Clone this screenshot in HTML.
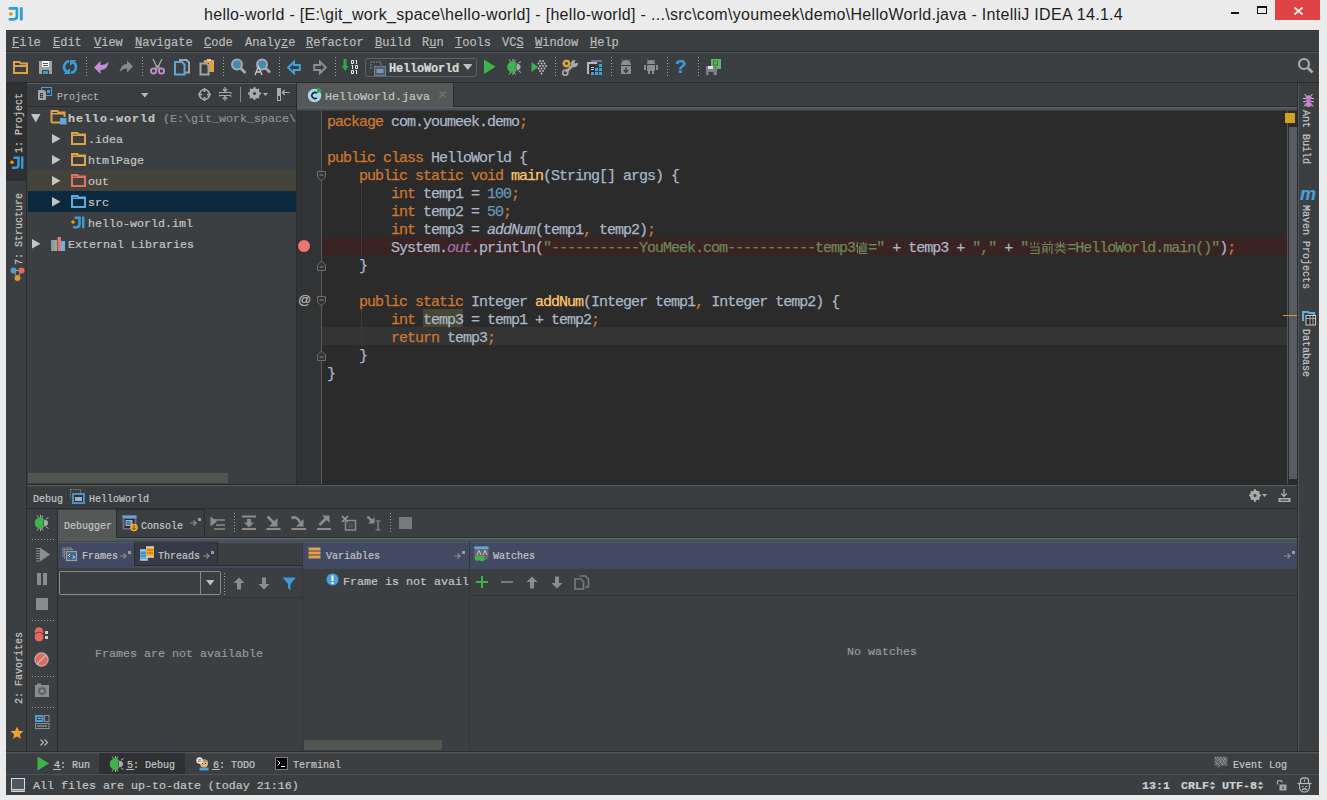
<!DOCTYPE html>
<html><head><meta charset="utf-8">
<style>
*{margin:0;padding:0;box-sizing:border-box}
html,body{width:1327px;height:800px;overflow:hidden;background:#ebebeb;font-family:"Liberation Mono",monospace}
.a{position:absolute;display:block}
.t{position:absolute;white-space:pre;line-height:1;font-family:"Liberation Mono",monospace;-webkit-text-stroke:0.2px}
.u{text-decoration:underline;text-underline-offset:1px}
.code{font-family:"Liberation Mono",monospace;font-size:15px;letter-spacing:-1px;-webkit-text-stroke:0.25px;color:#a9b7c6;white-space:pre;position:absolute;left:327px;line-height:18px}
.k{color:#cc7832}.n{color:#6897bb}.s{color:#6a8759}.f{color:#ffc66d}.st{color:#9876aa;font-style:italic}.i{font-style:italic}
.cj{display:inline-block;width:13px;height:13px;vertical-align:-2px;letter-spacing:0}
.b{font-weight:bold;letter-spacing:1px}
</style></head><body>
<div class="t" style="left:204px;top:7px;font-size:16px;color:#1e1e1e;font-family:'Liberation Sans',sans-serif;letter-spacing:0.3px;-webkit-text-stroke:0">hello-world - [E:\git_work_space\hello-world] - [hello-world] - ...\src\com\youmeek\demo\HelloWorld.java - IntelliJ IDEA 14.1.4</div>
<div class="a" style="left:1275px;top:0px;width:45px;height:20px;background:#e04343;"></div>
<svg class="a" style="left:1294px;top:7px;" width="9" height="8" viewBox="0 0 9 8"><path d="M0.5 0.5L8.5 7.5M8.5 0.5L0.5 7.5" stroke="#fff" stroke-width="1.6"/></svg>
<div class="a" style="left:1231px;top:12px;width:8px;height:2px;background:#111;"></div>
<div class="a" style="left:1257px;top:6px;width:10px;height:8px;background:transparent;border:1px solid #111;border-top-width:2px"></div>
<svg class="a" style="left:8px;top:6px;" width="16" height="16" viewBox="0 0 16 16"><path d="M1.8 2.4H8.9V10.3Q8.9 13.3 5.6 13.3H1.8" fill="none" stroke="#2a9fd8" stroke-width="2.7" stroke-linecap="round" stroke-linejoin="round"/><path d="M13.3 2.4V13.3" stroke="#2a9fd8" stroke-width="2.9" stroke-linecap="round"/><circle cx="2.8" cy="8" r="1.8" fill="#f08c00"/></svg>
<div class="a" style="left:6px;top:30px;width:1313px;height:765px;background:#3c3f41;"></div>
<div class="a" style="left:1319px;top:30px;width:1px;height:765px;background:#f2f2f2;"></div>
<div class="t" style="left:12px;top:37px;font-size:12px;color:#bbbbbb;"><span class="u">F</span>ile</div>
<div class="t" style="left:53px;top:37px;font-size:12px;color:#bbbbbb;"><span class="u">E</span>dit</div>
<div class="t" style="left:94px;top:37px;font-size:12px;color:#bbbbbb;"><span class="u">V</span>iew</div>
<div class="t" style="left:135px;top:37px;font-size:12px;color:#bbbbbb;"><span class="u">N</span>avigate</div>
<div class="t" style="left:204px;top:37px;font-size:12px;color:#bbbbbb;"><span class="u">C</span>ode</div>
<div class="t" style="left:245px;top:37px;font-size:12px;color:#bbbbbb;">Analy<span class="u">z</span>e</div>
<div class="t" style="left:306px;top:37px;font-size:12px;color:#bbbbbb;"><span class="u">R</span>efactor</div>
<div class="t" style="left:375px;top:37px;font-size:12px;color:#bbbbbb;"><span class="u">B</span>uild</div>
<div class="t" style="left:422px;top:37px;font-size:12px;color:#bbbbbb;">R<span class="u">u</span>n</div>
<div class="t" style="left:455px;top:37px;font-size:12px;color:#bbbbbb;"><span class="u">T</span>ools</div>
<div class="t" style="left:502px;top:37px;font-size:12px;color:#bbbbbb;">VC<span class="u">S</span></div>
<div class="t" style="left:535px;top:37px;font-size:12px;color:#bbbbbb;"><span class="u">W</span>indow</div>
<div class="t" style="left:590px;top:37px;font-size:12px;color:#bbbbbb;"><span class="u">H</span>elp</div>
<div class="a" style="left:6px;top:51px;width:1313px;height:1px;background:#2d2f2d;"></div>
<div class="a" style="left:6px;top:52px;width:1313px;height:1px;background:#4e5560;"></div>
<div class="a" style="left:6px;top:30px;width:1313px;height:1px;background:#35352f;"></div>
<div class="a" style="left:6px;top:31px;width:1313px;height:1px;background:#463f46;"></div>
<div class="a" style="left:6px;top:82px;width:1313px;height:1px;background:#2b2b2b;"></div>
<div class="a" style="left:6px;top:83px;width:20px;height:98px;background:#2e3032;"></div>
<div class="a" style="left:26px;top:83px;width:1px;height:669px;background:#2b2b2b;"></div>
<div class="a" style="left:27px;top:84px;width:269px;height:22px;background:#3a3d3f;"></div>
<div class="a" style="left:27px;top:83px;width:269px;height:1px;background:#555d68;"></div>
<div class="a" style="left:27px;top:106px;width:269px;height:1px;background:#2b2b2b;"></div>
<div class="a" style="left:28px;top:170px;width:268px;height:21px;background:#45443a;"></div>
<div class="a" style="left:28px;top:191px;width:268px;height:21px;background:#0d293e;"></div>
<div class="a" style="left:28px;top:473px;width:200px;height:10px;background:#52554f;"></div>
<div class="a" style="left:296px;top:83px;width:1px;height:401px;background:#2b2b2b;"></div>
<div class="a" style="left:297px;top:83px;width:156px;height:24px;background:#545856;"></div>
<div class="a" style="left:453px;top:83px;width:1px;height:24px;background:#2b2b2b;"></div>
<div class="a" style="left:454px;top:106px;width:843px;height:1px;background:#2b2b2b;"></div>
<div class="a" style="left:297px;top:107px;width:1000px;height:1px;background:#58656b;"></div>
<div class="a" style="left:297px;top:108px;width:1000px;height:2px;background:#4c5360;"></div>
<div class="a" style="left:297px;top:110px;width:1000px;height:1px;background:#3f3d33;"></div>
<div class="a" style="left:297px;top:111px;width:24px;height:373px;background:#313335;"></div>
<div class="a" style="left:321px;top:111px;width:1px;height:373px;background:#565a60;"></div>
<div class="a" style="left:322px;top:111px;width:975px;height:373px;background:#2b2b2b;"></div>
<div class="a" style="left:322px;top:237px;width:966px;height:18px;background:#3a2323;"></div>
<div class="a" style="left:322px;top:327px;width:966px;height:18px;background:#343434;"></div>
<div class="a" style="left:423px;top:309px;width:40px;height:18px;background:#484733;"></div>
<div class="a" style="left:1287px;top:111px;width:1px;height:373px;background:#4e5662;"></div>
<div class="a" style="left:1289px;top:127px;width:8px;height:352px;background:#585c62;"></div>
<div class="a" style="left:1285px;top:113px;width:10px;height:10px;background:#d3a21b;"></div>
<div class="a" style="left:298px;top:240px;width:12px;height:12px;background:#ee7670;border-radius:6px"></div>
<div class="a" style="left:1297px;top:83px;width:1px;height:669px;background:#2b2b2b;"></div>
<div class="a" style="left:1298px;top:83px;width:1px;height:669px;background:#4e5660;"></div>
<div class="a" style="left:27px;top:486px;width:1270px;height:22px;background:#3a3d3f;"></div>
<div class="a" style="left:27px;top:484px;width:1270px;height:1px;background:#2b2b2b;"></div>
<div class="a" style="left:27px;top:485px;width:1270px;height:1px;background:#4e5660;"></div>
<div class="a" style="left:27px;top:486px;width:1270px;height:1px;background:#45453c;"></div>
<div class="a" style="left:27px;top:508px;width:1270px;height:1px;background:#2b2b2b;"></div>
<div class="a" style="left:57px;top:509px;width:1px;height:242px;background:#2b2b2b;"></div>
<div class="a" style="left:58px;top:510px;width:58px;height:31px;background:#545856;"></div>
<div class="a" style="left:116px;top:537px;width:1181px;height:1px;background:#2b2e2a;"></div>
<div class="a" style="left:116px;top:538px;width:1181px;height:1px;background:#5d6a70;"></div>
<div class="a" style="left:116px;top:539px;width:1181px;height:2px;background:#4c5360;"></div>
<div class="a" style="left:58px;top:541px;width:1239px;height:1px;background:#4a4838;"></div>
<div class="a" style="left:58px;top:542px;width:1239px;height:1px;background:#4f5a70;"></div>
<div class="a" style="left:58px;top:543px;width:244px;height:25px;background:#414a62;"></div>
<div class="a" style="left:134px;top:542px;width:83px;height:23px;background:#363a46;"></div>
<div class="a" style="left:218px;top:543px;width:84px;height:22px;background:#3c3f41;"></div>
<div class="a" style="left:218px;top:565px;width:84px;height:1px;background:#2b2b2b;"></div>
<div class="a" style="left:303px;top:543px;width:166px;height:26px;background:#414a62;"></div>
<div class="a" style="left:470px;top:543px;width:827px;height:26px;background:#414a62;"></div>
<div class="a" style="left:302px;top:542px;width:1px;height:209px;background:#343638;"></div>
<div class="a" style="left:469px;top:542px;width:1px;height:209px;background:#343638;"></div>
<div class="a" style="left:304px;top:740px;width:138px;height:10px;background:#52554f;"></div>
<div class="a" style="left:6px;top:751px;width:1313px;height:1px;background:#2b2e2a;"></div>
<div class="a" style="left:6px;top:752px;width:1313px;height:1px;background:#4e5560;"></div>
<div class="a" style="left:6px;top:753px;width:1313px;height:1px;background:#4a4838;"></div>
<div class="a" style="left:99px;top:753px;width:86px;height:21px;background:#2e3032;"></div>
<div class="a" style="left:6px;top:774px;width:1313px;height:1px;background:#4d5055;"></div>
<div class="t" style="left:57px;top:93px;font-size:10px;color:#a8aaa8;">Project</div>
<div class="t" style="left:68px;top:114px;font-size:11.67px;color:#c4c4c4;font-weight:bold;letter-spacing:1px">hello-world</div>
<div class="a" style="left:0;top:0;width:296px;height:130px;overflow:hidden">
<div class="t" style="left:163px;top:114px;font-size:11.67px;color:#8f9192;">(E:\git_work_space\hello-world)</div>
</div>
<div class="t" style="left:88px;top:135px;font-size:11.67px;color:#c4c4c4;">.idea</div>
<div class="t" style="left:88px;top:156px;font-size:11.67px;color:#c4c4c4;">htmlPage</div>
<div class="t" style="left:88px;top:177px;font-size:11.67px;color:#c4c4c4;">out</div>
<div class="t" style="left:88px;top:198px;font-size:11.67px;color:#c4c4c4;">src</div>
<div class="t" style="left:88px;top:219px;font-size:11.67px;color:#c4c4c4;">hello-world.iml</div>
<div class="t" style="left:68px;top:240px;font-size:11.67px;color:#c4c4c4;">External Libraries</div>
<div class="t" style="left:325px;top:92px;font-size:11.67px;color:#c4c4c4;">HelloWorld.java</div>
<div class="t" style="left:33px;top:495px;font-size:10px;color:#c4c4c4;">Debug</div>
<div class="t" style="left:89px;top:495px;font-size:10px;color:#c4c4c4;">HelloWorld</div>
<div class="t" style="left:64px;top:522px;font-size:10px;color:#c4c4c4;">Debugger</div>
<div class="t" style="left:141px;top:522px;font-size:10px;color:#c4c4c4;">Console</div>
<div class="t" style="left:82px;top:552px;font-size:10px;color:#c4c4c4;">Frames</div>
<div class="t" style="left:158px;top:552px;font-size:10px;color:#c4c4c4;">Threads</div>
<div class="t" style="left:326px;top:552px;font-size:10px;color:#c4c4c4;">Variables</div>
<div class="t" style="left:493px;top:552px;font-size:10px;color:#c4c4c4;">Watches</div>
<div class="a" style="left:303px;top:569px;width:166px;height:26px;overflow:hidden">
<div class="t" style="left:40px;top:8px;font-size:11.67px;color:#c4c4c4;">Frame is not avail</div>
</div>
<div class="t" style="left:95px;top:649px;font-size:11.67px;color:#999999;">Frames are not available</div>
<div class="t" style="left:847px;top:647px;font-size:11.67px;color:#999999;">No watches</div>
<div class="t" style="left:54px;top:761px;font-size:10px;color:#c4c4c4;">4: Run</div>
<div class="t" style="left:127px;top:761px;font-size:10px;color:#c4c4c4;">5: Debug</div>
<div class="t" style="left:213px;top:761px;font-size:10px;color:#c4c4c4;">6: TODO</div>
<div class="t" style="left:293px;top:761px;font-size:10px;color:#c4c4c4;">Terminal</div>
<div class="t" style="left:1233px;top:761px;font-size:10px;color:#c4c4c4;">Event Log</div>
<div class="t" style="left:33px;top:781px;font-size:11.67px;color:#c4c4c4;">All files are up-to-date (today 21:16)</div>
<div class="t" style="left:1142px;top:781px;font-size:11.67px;color:#d0d0d0;font-weight:bold">13:1</div>
<div class="t" style="left:1181px;top:781px;font-size:11.67px;color:#d0d0d0;font-weight:bold">CRLF</div>
<div class="t" style="left:1222px;top:781px;font-size:11.67px;color:#d0d0d0;font-weight:bold">UTF-8</div>
<svg class="a" style="left:1209px;top:781px;" width="7" height="9" viewBox="0 0 7 9"><path d="M3.5 0.5L6.5 3.5H0.5Z M3.5 8.5L6.5 5.5H0.5Z" fill="#c8c8c8"/></svg>
<svg class="a" style="left:1257px;top:781px;" width="7" height="9" viewBox="0 0 7 9"><path d="M3.5 0.5L6.5 3.5H0.5Z M3.5 8.5L6.5 5.5H0.5Z" fill="#c8c8c8"/></svg>
<div class="t" style="left:15px;top:153px;font-size:10px;color:#c4c4c4;transform-origin:0 0;transform:rotate(-90deg)">1: Project</div>
<div class="t" style="left:15px;top:265px;font-size:10px;color:#c4c4c4;transform-origin:0 0;transform:rotate(-90deg)">7: Structure</div>
<div class="t" style="left:15px;top:704px;font-size:10px;color:#c4c4c4;transform-origin:0 0;transform:rotate(-90deg)">2: Favorites</div>
<div class="t" style="left:1310px;top:110px;font-size:10px;color:#c4c4c4;transform-origin:0 0;transform:rotate(90deg)">Ant Build</div>
<div class="t" style="left:1310px;top:205px;font-size:10px;color:#c4c4c4;transform-origin:0 0;transform:rotate(90deg)">Maven Projects</div>
<div class="t" style="left:1310px;top:329px;font-size:10px;color:#c4c4c4;transform-origin:0 0;transform:rotate(90deg)">Database</div>
<div class="a" style="left:86px;top:57px;width:1px;height:1px;background:#9a9a9a;"></div>
<div class="a" style="left:86px;top:60px;width:1px;height:1px;background:#9a9a9a;"></div>
<div class="a" style="left:86px;top:63px;width:1px;height:1px;background:#9a9a9a;"></div>
<div class="a" style="left:86px;top:66px;width:1px;height:1px;background:#9a9a9a;"></div>
<div class="a" style="left:86px;top:69px;width:1px;height:1px;background:#9a9a9a;"></div>
<div class="a" style="left:86px;top:72px;width:1px;height:1px;background:#9a9a9a;"></div>
<div class="a" style="left:86px;top:75px;width:1px;height:1px;background:#9a9a9a;"></div>
<div class="a" style="left:142px;top:57px;width:1px;height:1px;background:#9a9a9a;"></div>
<div class="a" style="left:142px;top:60px;width:1px;height:1px;background:#9a9a9a;"></div>
<div class="a" style="left:142px;top:63px;width:1px;height:1px;background:#9a9a9a;"></div>
<div class="a" style="left:142px;top:66px;width:1px;height:1px;background:#9a9a9a;"></div>
<div class="a" style="left:142px;top:69px;width:1px;height:1px;background:#9a9a9a;"></div>
<div class="a" style="left:142px;top:72px;width:1px;height:1px;background:#9a9a9a;"></div>
<div class="a" style="left:142px;top:75px;width:1px;height:1px;background:#9a9a9a;"></div>
<div class="a" style="left:223px;top:57px;width:1px;height:1px;background:#9a9a9a;"></div>
<div class="a" style="left:223px;top:60px;width:1px;height:1px;background:#9a9a9a;"></div>
<div class="a" style="left:223px;top:63px;width:1px;height:1px;background:#9a9a9a;"></div>
<div class="a" style="left:223px;top:66px;width:1px;height:1px;background:#9a9a9a;"></div>
<div class="a" style="left:223px;top:69px;width:1px;height:1px;background:#9a9a9a;"></div>
<div class="a" style="left:223px;top:72px;width:1px;height:1px;background:#9a9a9a;"></div>
<div class="a" style="left:223px;top:75px;width:1px;height:1px;background:#9a9a9a;"></div>
<div class="a" style="left:279px;top:57px;width:1px;height:1px;background:#9a9a9a;"></div>
<div class="a" style="left:279px;top:60px;width:1px;height:1px;background:#9a9a9a;"></div>
<div class="a" style="left:279px;top:63px;width:1px;height:1px;background:#9a9a9a;"></div>
<div class="a" style="left:279px;top:66px;width:1px;height:1px;background:#9a9a9a;"></div>
<div class="a" style="left:279px;top:69px;width:1px;height:1px;background:#9a9a9a;"></div>
<div class="a" style="left:279px;top:72px;width:1px;height:1px;background:#9a9a9a;"></div>
<div class="a" style="left:279px;top:75px;width:1px;height:1px;background:#9a9a9a;"></div>
<div class="a" style="left:335px;top:57px;width:1px;height:1px;background:#9a9a9a;"></div>
<div class="a" style="left:335px;top:60px;width:1px;height:1px;background:#9a9a9a;"></div>
<div class="a" style="left:335px;top:63px;width:1px;height:1px;background:#9a9a9a;"></div>
<div class="a" style="left:335px;top:66px;width:1px;height:1px;background:#9a9a9a;"></div>
<div class="a" style="left:335px;top:69px;width:1px;height:1px;background:#9a9a9a;"></div>
<div class="a" style="left:335px;top:72px;width:1px;height:1px;background:#9a9a9a;"></div>
<div class="a" style="left:335px;top:75px;width:1px;height:1px;background:#9a9a9a;"></div>
<div class="a" style="left:555px;top:57px;width:1px;height:1px;background:#9a9a9a;"></div>
<div class="a" style="left:555px;top:60px;width:1px;height:1px;background:#9a9a9a;"></div>
<div class="a" style="left:555px;top:63px;width:1px;height:1px;background:#9a9a9a;"></div>
<div class="a" style="left:555px;top:66px;width:1px;height:1px;background:#9a9a9a;"></div>
<div class="a" style="left:555px;top:69px;width:1px;height:1px;background:#9a9a9a;"></div>
<div class="a" style="left:555px;top:72px;width:1px;height:1px;background:#9a9a9a;"></div>
<div class="a" style="left:555px;top:75px;width:1px;height:1px;background:#9a9a9a;"></div>
<div class="a" style="left:611px;top:57px;width:1px;height:1px;background:#9a9a9a;"></div>
<div class="a" style="left:611px;top:60px;width:1px;height:1px;background:#9a9a9a;"></div>
<div class="a" style="left:611px;top:63px;width:1px;height:1px;background:#9a9a9a;"></div>
<div class="a" style="left:611px;top:66px;width:1px;height:1px;background:#9a9a9a;"></div>
<div class="a" style="left:611px;top:69px;width:1px;height:1px;background:#9a9a9a;"></div>
<div class="a" style="left:611px;top:72px;width:1px;height:1px;background:#9a9a9a;"></div>
<div class="a" style="left:611px;top:75px;width:1px;height:1px;background:#9a9a9a;"></div>
<div class="a" style="left:667px;top:57px;width:1px;height:1px;background:#9a9a9a;"></div>
<div class="a" style="left:667px;top:60px;width:1px;height:1px;background:#9a9a9a;"></div>
<div class="a" style="left:667px;top:63px;width:1px;height:1px;background:#9a9a9a;"></div>
<div class="a" style="left:667px;top:66px;width:1px;height:1px;background:#9a9a9a;"></div>
<div class="a" style="left:667px;top:69px;width:1px;height:1px;background:#9a9a9a;"></div>
<div class="a" style="left:667px;top:72px;width:1px;height:1px;background:#9a9a9a;"></div>
<div class="a" style="left:667px;top:75px;width:1px;height:1px;background:#9a9a9a;"></div>
<div class="a" style="left:698px;top:57px;width:1px;height:1px;background:#9a9a9a;"></div>
<div class="a" style="left:698px;top:60px;width:1px;height:1px;background:#9a9a9a;"></div>
<div class="a" style="left:698px;top:63px;width:1px;height:1px;background:#9a9a9a;"></div>
<div class="a" style="left:698px;top:66px;width:1px;height:1px;background:#9a9a9a;"></div>
<div class="a" style="left:698px;top:69px;width:1px;height:1px;background:#9a9a9a;"></div>
<div class="a" style="left:698px;top:72px;width:1px;height:1px;background:#9a9a9a;"></div>
<div class="a" style="left:698px;top:75px;width:1px;height:1px;background:#9a9a9a;"></div>
<svg class="a" style="left:13px;top:61px;" width="15" height="13" viewBox="0 0 15 13"><path d="M1 12V1H6.5L8 2.5H14V12Z" fill="none" stroke="#dba24a" stroke-width="2"/><rect x="2" y="4" width="11" height="2" fill="#dba24a"/></svg>
<svg class="a" style="left:39px;top:61px;" width="13" height="13" viewBox="0 0 13 13"><path d="M0 0H13V13H0Z" fill="#a3a3a3"/><rect x="3" y="0" width="7" height="6" fill="#fff"/><rect x="4" y="2" width="5" height="1" fill="#555"/><rect x="4" y="4" width="5" height="1" fill="#555"/><rect x="3" y="9" width="7" height="4" fill="#3c3f41"/><rect x="4" y="10" width="5" height="3" fill="#3d9ad6"/></svg>
<svg class="a" style="left:62px;top:59px;" width="16" height="16" viewBox="0 0 16 16"><path d="M7.2 2.2A5.8 5.8 0 0 0 5 13" fill="none" stroke="#3d9ad6" stroke-width="2.6"/><path d="M8.8 13.8A5.8 5.8 0 0 0 11 3" fill="none" stroke="#3d9ad6" stroke-width="2.6"/><path d="M1.5 15H8V9Z" fill="#3d9ad6"/><path d="M14.5 1H8V7Z" fill="#3d9ad6"/></svg>
<svg class="a" style="left:94px;top:60px;" width="15" height="15" viewBox="0 0 15 15"><path d="M0 7.5L6.5 1V5Q12 5 14.5 1.5Q14 10 6.5 10V14Z" fill="#c28ed4"/></svg>
<svg class="a" style="left:119px;top:60px;" width="15" height="14" viewBox="0 0 15 14"><path d="M14 6.5L8 0.5V4Q2 4 0.5 12.5Q3 8.5 8 8.5V12.5Z" fill="#8a8a8a"/></svg>
<svg class="a" style="left:150px;top:58px;" width="15" height="17" viewBox="0 0 15 17"><path d="M3 1L7.5 10M12 1L7.5 10" stroke="#a8a8a8" stroke-width="1.3"/><rect x="6" y="8" width="3" height="3" fill="none" stroke="#a8a8a8" stroke-width="1"/><circle cx="3.5" cy="13" r="2.6" fill="none" stroke="#c28ed4" stroke-width="1.8"/><circle cx="11.5" cy="13" r="2.6" fill="none" stroke="#c28ed4" stroke-width="1.8"/></svg>
<svg class="a" style="left:174px;top:59px;" width="16" height="17" viewBox="0 0 16 17"><path d="M5 1H12.5L15 3.5V13.5H11" fill="none" stroke="#a3a3a3" stroke-width="2"/><path d="M1 3H8L10.5 5.5V15.5H1Z" fill="#3c3f41" stroke="#5ba7d9" stroke-width="2"/></svg>
<svg class="a" style="left:199px;top:58px;" width="16" height="18" viewBox="0 0 16 18"><path d="M5 2H15V14H10V5H5Z" fill="#e0a246"/><rect x="8" y="1" width="4" height="2" fill="#d0d0d0"/><path d="M1.5 5.5H7.5L9.5 7.5V16.5H1.5Z" fill="#3c3f41" stroke="#a3a3a3" stroke-width="2"/></svg>
<svg class="a" style="left:230px;top:58px;" width="17" height="17" viewBox="0 0 17 17"><circle cx="7" cy="6.5" r="5" fill="#3f8bb8" stroke="#a9a9a9" stroke-width="2"/><path d="M10.5 10L15.5 15" stroke="#a9a9a9" stroke-width="2.6"/></svg>
<svg class="a" style="left:254px;top:58px;" width="17" height="18" viewBox="0 0 17 18"><circle cx="8" cy="6.5" r="5" fill="#3f8bb8" stroke="#a9a9a9" stroke-width="2"/><path d="M11.5 10L16 14.5" stroke="#a9a9a9" stroke-width="2.6"/><path d="M1 17L4.5 8.5L8 17M2.5 14H6.5" fill="none" stroke="#c8c8c8" stroke-width="1.3"/></svg>
<svg class="a" style="left:287px;top:60px;" width="14" height="15" viewBox="0 0 14 15"><path d="M1.2 7.5L7 1.8V5H12.8V10H7V13.2Z" fill="none" stroke="#3fa3da" stroke-width="2"/></svg>
<svg class="a" style="left:312px;top:60px;" width="15" height="15" viewBox="0 0 15 15"><path d="M13.8 7.5L8 1.8V5H2.2V10H8V13.2Z" fill="none" stroke="#8e8e8e" stroke-width="2"/></svg>
<svg class="a" style="left:342px;top:59px;" width="17" height="17" viewBox="0 0 17 17"><path d="M3 0V8" stroke="#33a846" stroke-width="3"/><path d="M0 7H6.5L3.2 12Z" fill="#33a846"/></svg>
<svg class="a" style="left:351px;top:60px;" width="8" height="14" viewBox="0 0 8 14"><path d="M0.5 0.5H2.5V3.5H0.5Z" fill="none" stroke="#e8e8e8"/><path d="M5.5 0V4M4.5 1L5.5 0" fill="none" stroke="#e8e8e8"/><path d="M1.5 5V9M0.5 6L1.5 5" fill="none" stroke="#e8e8e8"/><path d="M4.5 5.5H6.5V8.5H4.5Z" fill="none" stroke="#e8e8e8"/><path d="M0.5 10.5H2.5V13.5H0.5Z" fill="none" stroke="#e8e8e8"/><path d="M5.5 10V14M4.5 11L5.5 10" fill="none" stroke="#e8e8e8"/></svg>
<div class="a" style="left:365px;top:58px;width:112px;height:19px;background:transparent;border:1px solid #5f6263;border-radius:3px"></div>
<svg class="a" style="left:370px;top:61px;" width="16" height="15" viewBox="0 0 16 15"><path d="M1 8V1H11V4" fill="none" stroke="#7a8ea0" stroke-width="1" stroke-dasharray="2 1"/><rect x="4.5" y="5.5" width="11" height="9" fill="#555b66" stroke="#6d7f92"/><rect x="6.5" y="8" width="7" height="4" fill="#6e9ab8"/></svg>
<div class="t" style="left:389px;top:63px;font-size:12px;color:#d8d8d8;font-weight:bold;letter-spacing:-0.2px">HelloWorld</div>
<svg class="a" style="left:463px;top:64px;" width="10" height="6" viewBox="0 0 10 6"><path d="M0 0H9.5L4.75 6Z" fill="#c0c0c0"/></svg>
<svg class="a" style="left:484px;top:59px;" width="12" height="16" viewBox="0 0 12 16"><path d="M0 0.5L11.5 7.7L0 15Z" fill="#3cb44b"/></svg>
<svg class="a" style="left:506px;top:59px;" width="16" height="16" viewBox="0 0 16 16"><path d="M10.6 3.9A5.6 5.6 0 1 0 10.6 12.1Q8.8 8 10.6 3.9Z" fill="#3cb44b"/><path d="M10.9 4.6Q14.6 5.2 14.6 8Q14.6 10.8 10.9 11.4Q9.6 8 10.9 4.6Z" fill="#aaa"/><path d="M3 0.5L5 3M7 0V2.5M9.5 0.5L8 3M3 15.5L5 13M7 16V13.5M9.5 15.5L8 13M12.5 4L15 2.5M12.5 12L15 13.5" stroke="#b0b0b0" stroke-width="1"/></svg>
<svg class="a" style="left:531px;top:59px;" width="16" height="16" viewBox="0 0 16 16"><path d="M0.5 3L7 8L0.5 13Z" fill="#3cb44b"/><circle cx="9" cy="2" r="0.9" fill="#c8c8c8"/><circle cx="12" cy="2" r="0.9" fill="#c8c8c8"/><circle cx="7.5" cy="4.5" r="0.9" fill="#c8c8c8"/><circle cx="10.5" cy="4.5" r="0.9" fill="#c8c8c8"/><circle cx="13.5" cy="4.5" r="0.9" fill="#c8c8c8"/><circle cx="9" cy="7" r="0.9" fill="#c8c8c8"/><circle cx="12" cy="7" r="0.9" fill="#c8c8c8"/><circle cx="15" cy="7" r="0.9" fill="#c8c8c8"/><circle cx="7.5" cy="9.5" r="0.9" fill="#c8c8c8"/><circle cx="10.5" cy="9.5" r="0.9" fill="#c8c8c8"/><circle cx="13.5" cy="9.5" r="0.9" fill="#c8c8c8"/><circle cx="9" cy="12" r="0.9" fill="#c8c8c8"/><circle cx="12" cy="12" r="0.9" fill="#c8c8c8"/><circle cx="10.5" cy="14.5" r="0.9" fill="#c8c8c8"/></svg>
<svg class="a" style="left:562px;top:59px;" width="17" height="17" viewBox="0 0 17 17"><path d="M4 13L12 5" stroke="#a8a8a8" stroke-width="2.6"/><path d="M13.5 1.2A3.6 3.6 0 1 0 15.8 3.5L13.3 4.6L12.4 3.7Z" fill="#a8a8a8"/><circle cx="3.3" cy="13.7" r="2.6" fill="none" stroke="#a8a8a8" stroke-width="1.6"/><circle cx="4.5" cy="4.5" r="2.6" fill="none" stroke="#e3a23e" stroke-width="2.4"/><path d="M4.5 0.5V2M4.5 7V8.5M0.5 4.5H2M7 4.5H8.5M1.7 1.7L2.6 2.6M6.4 6.4L7.3 7.3M7.3 1.7L6.4 2.6M1.7 7.3L2.6 6.4" stroke="#e3a23e" stroke-width="1.4"/></svg>
<svg class="a" style="left:587px;top:59px;" width="16" height="17" viewBox="0 0 16 17"><path d="M1 15V4H10" fill="none" stroke="#b9b9b9" stroke-width="2"/><rect x="4" y="1" width="11" height="2" fill="#6c78a0"/><rect x="3" y="6" width="5" height="8" fill="#2b2b2b"/><rect x="4" y="8" width="3" height="1" fill="#ccc"/><rect x="4" y="10" width="3" height="1" fill="#ccc"/><rect x="12" y="5" width="3" height="3" fill="#3fa3e0"/><rect x="8" y="9" width="3" height="3" fill="#3fa3e0"/><rect x="12" y="9" width="3" height="3" fill="#3fa3e0"/><rect x="4" y="13" width="3" height="3" fill="#3fa3e0"/><rect x="8" y="13" width="3" height="3" fill="#3fa3e0"/><rect x="12" y="13" width="3" height="3" fill="#3fa3e0"/></svg>
<svg class="a" style="left:620px;top:59px;" width="12" height="16" viewBox="0 0 12 16"><path d="M1 6A5 5 0 0 1 11 6Z" fill="#8c8c8c"/><path d="M2 0.5L3.5 2.5M10 0.5L8.5 2.5" stroke="#8c8c8c"/><rect x="1" y="7" width="10" height="8" fill="#8c8c8c"/><path d="M6 8.5V13M3.8 11L6 13.5L8.2 11" fill="none" stroke="#3c3f41" stroke-width="1.4"/></svg>
<svg class="a" style="left:643px;top:59px;" width="16" height="16" viewBox="0 0 16 16"><path d="M4 5A4 4 0 0 1 12 5Z" fill="#8c8c8c"/><path d="M4.5 0.5L5.5 2M11.5 0.5L10.5 2" stroke="#8c8c8c"/><rect x="4" y="6" width="8" height="6" fill="#8c8c8c"/><rect x="1" y="6" width="2" height="5" fill="#8c8c8c"/><rect x="13" y="6" width="2" height="5" fill="#8c8c8c"/><rect x="5" y="12" width="2" height="3" fill="#8c8c8c"/><rect x="9" y="12" width="2" height="3" fill="#8c8c8c"/></svg>
<div class="t" style="left:675px;top:57px;font-size:19px;color:#3d9ad6;font-family:'Liberation Sans',sans-serif;font-weight:bold">?</div>
<svg class="a" style="left:705px;top:58px;" width="17" height="18" viewBox="0 0 17 18"><rect x="6" y="1" width="10" height="10" fill="#5cb85c"/><rect x="8.5" y="3" width="4" height="4" fill="none" stroke="#3a7a3a"/><rect x="1" y="8" width="11" height="9" fill="#7c7f88"/><rect x="3" y="8" width="5" height="3" fill="#e0e0e0"/><rect x="3.5" y="14" width="5" height="3" fill="#3c3f41"/></svg>
<svg class="a" style="left:1297px;top:57px;" width="17" height="18" viewBox="0 0 17 18"><circle cx="7" cy="7" r="5" fill="none" stroke="#a9a9a9" stroke-width="2.2"/><path d="M10.5 10.5L15.5 15.5" stroke="#a9a9a9" stroke-width="2.8"/></svg>
<svg class="a" style="left:37px;top:87px;" width="16" height="14" viewBox="0 0 16 14"><rect x="4.5" y="0.5" width="10" height="8" fill="none" stroke="#4b9fd5"/><rect x="10" y="3" width="3" height="3" fill="#4b9fd5"/><path d="M1 3H7L9 5V13H1Z" fill="#a5a7a5"/><rect x="3" y="6" width="3" height="5" fill="#3c3f41"/><rect x="3.8" y="7" width="1.5" height="1" fill="#aaa"/><rect x="3.8" y="9" width="1.5" height="1" fill="#aaa"/></svg>
<svg class="a" style="left:141px;top:93px;" width="8" height="5" viewBox="0 0 8 5"><path d="M0 0H7.5L3.75 4.5Z" fill="#b8b8b8"/></svg>
<svg class="a" style="left:198px;top:88px;" width="13" height="13" viewBox="0 0 13 13"><circle cx="6.5" cy="6.5" r="5" fill="none" stroke="#acacac" stroke-width="1.6"/><path d="M6.5 0V4M6.5 9V13M0 6.5H4M9 6.5H13" stroke="#acacac" stroke-width="1.6"/></svg>
<svg class="a" style="left:219px;top:87px;" width="13" height="15" viewBox="0 0 13 15"><path d="M0 5.5H12M0 8.5H12M0 5.5V7M12 5.5V7M0 8.5V10M12 8.5V10" stroke="#acacac" stroke-width="1"/><path d="M6 0V4M3.8 2L6 4.3L8.2 2M6 14V10M3.8 12L6 9.7L8.2 12" fill="none" stroke="#acacac" stroke-width="1.2"/></svg>
<div class="a" style="left:240px;top:87px;width:1px;height:15px;background:#8a8a8a;"></div>
<svg class="a" style="left:248px;top:87px;" width="21" height="14" viewBox="0 0 21 14"><circle cx="6.5" cy="6.5" r="4" fill="none" stroke="#acacac" stroke-width="2.6"/><path d="M6.5 0V13M0 6.5H13M2 2L11 11M11 2L2 11" stroke="#acacac" stroke-width="1.8"/><circle cx="6.5" cy="6.5" r="1.6" fill="#3c3f41"/><path d="M15 6H20L17.5 9Z" fill="#acacac"/></svg>
<svg class="a" style="left:276px;top:88px;" width="14" height="13" viewBox="0 0 14 13"><rect x="1.5" y="0.5" width="3" height="12" fill="none" stroke="#acacac"/><rect x="1" y="0" width="4" height="8" fill="#acacac"/><path d="M6 4.5H13.5M6.2 4.5L8.8 2M6.2 4.5L8.8 7" stroke="#acacac" stroke-width="1.2"/></svg>
<svg class="a" style="left:31px;top:114px;" width="10" height="9" viewBox="0 0 10 9"><path d="M0 0H9.5L4.75 8.5Z" fill="#c4c4c4"/></svg>
<svg class="a" style="left:50px;top:110px;" width="17" height="15" viewBox="0 0 17 15"><path d="M1.5 12.5V1H7.5L8.5 2.5H14.5V7" fill="none" stroke="#dba24a" stroke-width="2"/><path d="M1.5 12.5H10" stroke="#dba24a" stroke-width="2"/><rect x="1" y="3" width="13" height="1.5" fill="#dba24a"/><rect x="10" y="8" width="6.5" height="6.5" fill="#5ea9db"/></svg>
<svg class="a" style="left:52px;top:134px;" width="9" height="10" viewBox="0 0 9 10"><path d="M0 0V9.5L8.5 4.75Z" fill="#c4c4c4"/></svg>
<svg class="a" style="left:71px;top:132px;" width="15" height="13" viewBox="0 0 15 13"><path d="M1 12V1H6.5L7.5 2.5H14V12Z" fill="none" stroke="#dba24a" stroke-width="2"/><rect x="1" y="2.5" width="13" height="1.5" fill="#dba24a"/></svg>
<svg class="a" style="left:52px;top:155px;" width="9" height="10" viewBox="0 0 9 10"><path d="M0 0V9.5L8.5 4.75Z" fill="#c4c4c4"/></svg>
<svg class="a" style="left:71px;top:153px;" width="15" height="13" viewBox="0 0 15 13"><path d="M1 12V1H6.5L7.5 2.5H14V12Z" fill="none" stroke="#dba24a" stroke-width="2"/><rect x="1" y="2.5" width="13" height="1.5" fill="#dba24a"/></svg>
<svg class="a" style="left:52px;top:176px;" width="9" height="10" viewBox="0 0 9 10"><path d="M0 0V9.5L8.5 4.75Z" fill="#c4c4c4"/></svg>
<svg class="a" style="left:71px;top:174px;" width="15" height="13" viewBox="0 0 15 13"><path d="M1 12V1H6.5L7.5 2.5H14V12Z" fill="none" stroke="#e07068" stroke-width="2"/><rect x="1" y="2.5" width="13" height="1.5" fill="#e07068"/></svg>
<svg class="a" style="left:52px;top:197px;" width="9" height="10" viewBox="0 0 9 10"><path d="M0 0V9.5L8.5 4.75Z" fill="#c4c4c4"/></svg>
<svg class="a" style="left:71px;top:195px;" width="15" height="13" viewBox="0 0 15 13"><path d="M1 12V1H6.5L7.5 2.5H14V12Z" fill="none" stroke="#5ea9db" stroke-width="2"/><rect x="1" y="2.5" width="13" height="1.5" fill="#5ea9db"/></svg>
<svg class="a" style="left:71px;top:216px;" width="14" height="13" viewBox="0 0 14 13"><path d="M3.5 1.8H8.5V8.5Q8.5 11.2 5.5 11.2H2" fill="none" stroke="#3d9ad6" stroke-width="2.6"/><path d="M12.2 0.5V12.2" stroke="#3d9ad6" stroke-width="2.4"/><circle cx="2" cy="6" r="1.8" fill="#f0970c"/></svg>
<svg class="a" style="left:32px;top:239px;" width="9" height="10" viewBox="0 0 9 10"><path d="M0 0V9.5L8.5 4.75Z" fill="#c4c4c4"/></svg>
<svg class="a" style="left:50px;top:237px;" width="16" height="14" viewBox="0 0 16 14"><rect x="1" y="3" width="3" height="11" fill="#8c9aa0"/><rect x="4" y="3" width="3" height="11" fill="#98a898"/><rect x="7.5" y="0" width="3.5" height="14" fill="#e8786e"/><rect x="11" y="4" width="4" height="10" fill="#66b3e6"/></svg>
<svg class="a" style="left:307px;top:87px;" width="16" height="16" viewBox="0 0 16 16"><circle cx="7.5" cy="8.5" r="6.8" fill="#a9d3f2"/><path d="M9.8 6.2A3 3 0 1 0 9.8 10.8" fill="none" stroke="#222" stroke-width="1.5"/><path d="M10 0L15.5 3.5L10 6.5Z" fill="#2fa84a"/></svg>
<svg class="a" style="left:439px;top:91px;" width="7" height="7" viewBox="0 0 7 7"><path d="M0.5 0.5L6.5 6.5M6.5 0.5L0.5 6.5" stroke="#6d6f70" stroke-width="1.6"/></svg>
<svg class="a" style="left:317px;top:171px;" width="10" height="11" viewBox="0 0 10 11"><path d="M0.5 0.5H8.5V6L4.5 10L0.5 6Z" fill="#313335" stroke="#6b6d6e"/><path d="M2.5 4H6.5" stroke="#8a8a8a"/></svg>
<svg class="a" style="left:317px;top:260px;" width="10" height="11" viewBox="0 0 10 11"><path d="M0.5 10.5H8.5V5L4.5 1L0.5 5Z" fill="#313335" stroke="#6b6d6e"/><path d="M2.5 7H6.5" stroke="#8a8a8a"/></svg>
<svg class="a" style="left:317px;top:296px;" width="10" height="11" viewBox="0 0 10 11"><path d="M0.5 0.5H8.5V6L4.5 10L0.5 6Z" fill="#313335" stroke="#6b6d6e"/><path d="M2.5 4H6.5" stroke="#8a8a8a"/></svg>
<svg class="a" style="left:317px;top:350px;" width="10" height="11" viewBox="0 0 10 11"><path d="M0.5 10.5H8.5V5L4.5 1L0.5 5Z" fill="#313335" stroke="#6b6d6e"/><path d="M2.5 7H6.5" stroke="#8a8a8a"/></svg>
<div class="t" style="left:298px;top:293px;font-size:13px;color:#b8b8b8;font-family:'Liberation Sans',sans-serif">@</div>
<div class="a" style="left:361px;top:184px;width:1px;height:72px;background:#3b3b3b;"></div>
<div class="a" style="left:361px;top:310px;width:1px;height:36px;background:#3b3b3b;"></div>
<div class="a" style="left:1283px;top:315px;width:14px;height:1px;background:#d39a3a;"></div>
<svg class="a" style="left:69px;top:488px;" width="16" height="16" viewBox="0 0 16 16"><rect x="1.5" y="1.5" width="10" height="8" fill="none" stroke="#7d8a99" stroke-dasharray="1.5 1"/><rect x="4" y="6" width="11" height="9" fill="#2f3133" stroke="#4a90c2" stroke-width="2"/><rect x="6" y="9" width="7" height="4" fill="#8fb4d4"/></svg>
<svg class="a" style="left:1249px;top:489px;" width="19" height="14" viewBox="0 0 19 14"><circle cx="6" cy="6.5" r="3.8" fill="none" stroke="#acacac" stroke-width="2.4"/><path d="M6 0V13M0 6.5H12M1.8 2.3L10.2 10.7M10.2 2.3L1.8 10.7" stroke="#acacac" stroke-width="1.7"/><circle cx="6" cy="6.5" r="1.5" fill="#3c3f41"/><path d="M13 5H18L15.5 8Z" fill="#acacac"/></svg>
<svg class="a" style="left:1278px;top:489px;" width="13" height="14" viewBox="0 0 13 14"><path d="M6 0V7M3.3 4.5L6 7.5L8.7 4.5" fill="none" stroke="#acacac" stroke-width="1.3"/><rect x="0.5" y="9" width="12" height="4" fill="#acacac"/><rect x="2.5" y="10.5" width="8" height="1.2" fill="#3c3f41"/></svg>
<svg class="a" style="left:34px;top:515px;" width="16" height="16" viewBox="0 0 16 16"><path d="M10.1 3.9A5.6 5.6 0 1 0 10.1 12.1Q8.3 8 10.1 3.9Z" fill="#3cb44b"/><path d="M10.4 4.6Q14.1 5.2 14.1 8Q14.1 10.8 10.4 11.4Q9.1 8 10.4 4.6Z" fill="#aaa"/><path d="M3 0.5L5 3M6.5 0V2.5M9 0.5L7.5 3M3 15.5L5 13M6.5 16V13.5M9 15.5L7.5 13M12 4L14.5 2.5M12 12L14.5 13.5" stroke="#b0b0b0" stroke-width="1"/></svg>
<div class="a" style="left:32px;top:539px;width:1px;height:1px;background:#9a9a9a;"></div>
<div class="a" style="left:35px;top:539px;width:1px;height:1px;background:#9a9a9a;"></div>
<div class="a" style="left:38px;top:539px;width:1px;height:1px;background:#9a9a9a;"></div>
<div class="a" style="left:41px;top:539px;width:1px;height:1px;background:#9a9a9a;"></div>
<div class="a" style="left:44px;top:539px;width:1px;height:1px;background:#9a9a9a;"></div>
<div class="a" style="left:47px;top:539px;width:1px;height:1px;background:#9a9a9a;"></div>
<div class="a" style="left:50px;top:539px;width:1px;height:1px;background:#9a9a9a;"></div>
<div class="a" style="left:53px;top:539px;width:1px;height:1px;background:#9a9a9a;"></div>
<svg class="a" style="left:35px;top:547px;" width="16" height="15" viewBox="0 0 16 15"><path d="M1 1.5H5M1 4H5M1 6.5H5M1 9H5M1 11.5H5M1 14H5" stroke="#8c8c8c" stroke-width="1.2"/><path d="M5 0.5L15 7.5L5 14.5Z" fill="#8c8c8c"/></svg>
<div class="a" style="left:37px;top:573px;width:4px;height:12px;background:#8c8c8c;"></div>
<div class="a" style="left:43px;top:573px;width:4px;height:12px;background:#8c8c8c;"></div>
<div class="a" style="left:36px;top:598px;width:12px;height:12px;background:#8c8c8c;"></div>
<div class="a" style="left:32px;top:620px;width:1px;height:1px;background:#9a9a9a;"></div>
<div class="a" style="left:35px;top:620px;width:1px;height:1px;background:#9a9a9a;"></div>
<div class="a" style="left:38px;top:620px;width:1px;height:1px;background:#9a9a9a;"></div>
<div class="a" style="left:41px;top:620px;width:1px;height:1px;background:#9a9a9a;"></div>
<div class="a" style="left:44px;top:620px;width:1px;height:1px;background:#9a9a9a;"></div>
<div class="a" style="left:47px;top:620px;width:1px;height:1px;background:#9a9a9a;"></div>
<div class="a" style="left:50px;top:620px;width:1px;height:1px;background:#9a9a9a;"></div>
<div class="a" style="left:53px;top:620px;width:1px;height:1px;background:#9a9a9a;"></div>
<svg class="a" style="left:34px;top:627px;" width="16" height="16" viewBox="0 0 16 16"><circle cx="5" cy="4.5" r="4.3" fill="#e8675a"/><circle cx="5" cy="10" r="4.8" fill="#e8675a" stroke="#3c3f41" stroke-width="0.8"/><rect x="11" y="4" width="3" height="3" fill="#cfcfcf"/><rect x="11" y="9" width="3" height="3" fill="#cfcfcf"/></svg>
<svg class="a" style="left:34px;top:652px;" width="16" height="16" viewBox="0 0 16 16"><circle cx="7.5" cy="7.5" r="6.6" fill="#e8675a" stroke="#b8b8b8" stroke-width="1.2"/><path d="M3 12L12 3" stroke="#b8b8b8" stroke-width="1.6"/></svg>
<div class="a" style="left:32px;top:676px;width:1px;height:1px;background:#9a9a9a;"></div>
<div class="a" style="left:35px;top:676px;width:1px;height:1px;background:#9a9a9a;"></div>
<div class="a" style="left:38px;top:676px;width:1px;height:1px;background:#9a9a9a;"></div>
<div class="a" style="left:41px;top:676px;width:1px;height:1px;background:#9a9a9a;"></div>
<div class="a" style="left:44px;top:676px;width:1px;height:1px;background:#9a9a9a;"></div>
<div class="a" style="left:47px;top:676px;width:1px;height:1px;background:#9a9a9a;"></div>
<div class="a" style="left:50px;top:676px;width:1px;height:1px;background:#9a9a9a;"></div>
<div class="a" style="left:53px;top:676px;width:1px;height:1px;background:#9a9a9a;"></div>
<svg class="a" style="left:34px;top:683px;" width="16" height="15" viewBox="0 0 16 15"><rect x="1" y="2" width="14" height="12" fill="#8c8c8c"/><rect x="3" y="0.5" width="4" height="2" fill="#8c8c8c"/><circle cx="8" cy="8" r="4" fill="#5c5e60" stroke="#6f7173"/><circle cx="8" cy="8" r="2" fill="#8c8c8c"/></svg>
<div class="a" style="left:32px;top:707px;width:1px;height:1px;background:#9a9a9a;"></div>
<div class="a" style="left:35px;top:707px;width:1px;height:1px;background:#9a9a9a;"></div>
<div class="a" style="left:38px;top:707px;width:1px;height:1px;background:#9a9a9a;"></div>
<div class="a" style="left:41px;top:707px;width:1px;height:1px;background:#9a9a9a;"></div>
<div class="a" style="left:44px;top:707px;width:1px;height:1px;background:#9a9a9a;"></div>
<div class="a" style="left:47px;top:707px;width:1px;height:1px;background:#9a9a9a;"></div>
<div class="a" style="left:50px;top:707px;width:1px;height:1px;background:#9a9a9a;"></div>
<div class="a" style="left:53px;top:707px;width:1px;height:1px;background:#9a9a9a;"></div>
<svg class="a" style="left:34px;top:714px;" width="16" height="16" viewBox="0 0 16 16"><rect x="1" y="1" width="8.5" height="7" fill="#4a9fd8"/><rect x="3" y="3" width="4.5" height="3" fill="#2b2b2b"/><rect x="3.8" y="3.8" width="3" height="1.4" fill="#9fbfdf"/><rect x="10.5" y="1.5" width="4.5" height="6" fill="none" stroke="#8c8c9a"/><rect x="1.5" y="9.5" width="13.5" height="5" fill="none" stroke="#8c8c9a"/><rect x="3" y="11.5" width="10" height="1" fill="#9fbf9f"/></svg>
<svg class="a" style="left:40px;top:739px;" width="9" height="7" viewBox="0 0 9 7"><path d="M0.5 0.5L3.5 3.5L0.5 6.5M4.5 0.5L7.5 3.5L4.5 6.5" fill="none" stroke="#b8b8b8" stroke-width="1.1"/></svg>
<div class="a" style="left:116px;top:509px;width:1px;height:29px;background:#2b2b2b;"></div>
<div class="a" style="left:204px;top:509px;width:1px;height:29px;background:#2b2b2b;"></div>
<div class="a" style="left:116px;top:509px;width:89px;height:1px;background:#2b2b2b;"></div>
<div class="a" style="left:116px;top:537px;width:89px;height:1px;background:#2b2b2b;"></div>
<svg class="a" style="left:122px;top:515px;" width="17" height="17" viewBox="0 0 17 17"><rect x="0.5" y="0.5" width="14" height="14" fill="#6b6f80"/><rect x="0.5" y="0.5" width="14" height="2.5" fill="#5aa9e0"/><rect x="2.5" y="4" width="10" height="9" fill="#2b2b2b"/><rect x="3.5" y="5" width="7" height="6" fill="#8fb6d8"/><rect x="4.5" y="6.5" width="4" height="1" fill="#334"/><rect x="4.5" y="8.5" width="4" height="1" fill="#334"/><circle cx="12" cy="12.5" r="3.8" fill="#f0a830"/><path d="M12 10V14.5M10.2 12.8L12 14.8L13.8 12.8" fill="none" stroke="#7a4a10" stroke-width="1"/></svg>
<svg class="a" style="left:190px;top:518px;" width="13" height="9" viewBox="0 0 13 9"><path d="M0 5H6M3.5 2.5L6.2 5L3.5 7.5" fill="none" stroke="#8a8a8a" stroke-width="1.1"/><rect x="8" y="0" width="3" height="3" fill="#9a9a9a"/></svg>
<svg class="a" style="left:210px;top:515px;" width="16" height="16" viewBox="0 0 16 16"><path d="M0.5 1.5L7 6.5L0.5 11.5Z" fill="#8c8c8c"/><path d="M4 5H15M6 10H15M4 14H15" stroke="#8c8c8c" stroke-width="1.6"/></svg>
<div class="a" style="left:234px;top:513px;width:1px;height:1px;background:#9a9a9a;"></div>
<div class="a" style="left:234px;top:516px;width:1px;height:1px;background:#9a9a9a;"></div>
<div class="a" style="left:234px;top:519px;width:1px;height:1px;background:#9a9a9a;"></div>
<div class="a" style="left:234px;top:522px;width:1px;height:1px;background:#9a9a9a;"></div>
<div class="a" style="left:234px;top:525px;width:1px;height:1px;background:#9a9a9a;"></div>
<div class="a" style="left:234px;top:528px;width:1px;height:1px;background:#9a9a9a;"></div>
<div class="a" style="left:234px;top:531px;width:1px;height:1px;background:#9a9a9a;"></div>
<svg class="a" style="left:242px;top:515px;" width="15" height="16" viewBox="0 0 15 16"><rect x="0" y="0.5" width="14" height="2" fill="#8c8c8c"/><path d="M5 4H9V7.5H12L7 12.5L2 7.5H5Z" fill="#8c8c8c"/><rect x="0" y="13" width="14" height="2" fill="#8c8c8c"/></svg>
<svg class="a" style="left:266px;top:515px;" width="15" height="16" viewBox="0 0 15 16"><path d="M1.5 1.5L9 9" stroke="#8c8c8c" stroke-width="2.6"/><path d="M11.5 3V11.5H3Z" fill="#8c8c8c"/><rect x="0.5" y="13" width="14" height="2" fill="#8c8c8c"/></svg>
<svg class="a" style="left:291px;top:515px;" width="16" height="16" viewBox="0 0 16 16"><path d="M0.5 3Q6 0.5 9 7.5" fill="none" stroke="#8c8c8c" stroke-width="2.6"/><path d="M12.5 4V11.5H5Z" fill="#8c8c8c"/><rect x="0.5" y="13" width="14.5" height="2" fill="#8c8c8c"/></svg>
<svg class="a" style="left:317px;top:515px;" width="15" height="16" viewBox="0 0 15 16"><path d="M2.5 10L9.5 3" stroke="#8c8c8c" stroke-width="2.6"/><path d="M5 0.5H12.5V8Z" fill="#8c8c8c"/><rect x="0" y="13" width="14" height="2" fill="#8c8c8c"/></svg>
<svg class="a" style="left:341px;top:515px;" width="16" height="16" viewBox="0 0 16 16"><path d="M1 1L7 7M7 1L1 7" stroke="#9a9a9a" stroke-width="1.6"/><rect x="4.5" y="5.5" width="10" height="9.5" fill="none" stroke="#8c8c8c" stroke-width="1.5"/><rect x="7" y="8" width="5" height="5" fill="#4a4f5a"/></svg>
<svg class="a" style="left:367px;top:516px;" width="15" height="15" viewBox="0 0 15 15"><path d="M0.5 0.5L6 6" stroke="#8c8c8c" stroke-width="2.4"/><path d="M7.5 1V7.5H1Z" fill="#8c8c8c"/><path d="M8.5 5H13.5M11 5V14M8.5 14H13.5" stroke="#8c8c9a" stroke-width="1.2"/></svg>
<div class="a" style="left:390px;top:513px;width:1px;height:1px;background:#9a9a9a;"></div>
<div class="a" style="left:390px;top:516px;width:1px;height:1px;background:#9a9a9a;"></div>
<div class="a" style="left:390px;top:519px;width:1px;height:1px;background:#9a9a9a;"></div>
<div class="a" style="left:390px;top:522px;width:1px;height:1px;background:#9a9a9a;"></div>
<div class="a" style="left:390px;top:525px;width:1px;height:1px;background:#9a9a9a;"></div>
<div class="a" style="left:390px;top:528px;width:1px;height:1px;background:#9a9a9a;"></div>
<div class="a" style="left:390px;top:531px;width:1px;height:1px;background:#9a9a9a;"></div>
<div class="a" style="left:399px;top:517px;width:13px;height:12px;background:#7a7a7a;"></div>
<svg class="a" style="left:62px;top:546px;" width="16" height="16" viewBox="0 0 16 16"><path d="M1 11V2H10M2.5 12.5V3.5H11.5" fill="none" stroke="#8a8a8a" stroke-width="1"/><rect x="4.5" y="5.5" width="10" height="9" fill="#3d6a90" stroke="#a0a0a0" stroke-width="1.2"/><path d="M8 8L6.5 9.5L8 11M11 9.5L12.5 11L11 12.5" fill="none" stroke="#fff" stroke-width="1"/></svg>
<svg class="a" style="left:120px;top:551px;" width="13" height="9" viewBox="0 0 13 9"><path d="M0 5H6M3.5 2.5L6.2 5L3.5 7.5" fill="none" stroke="#8a8a8a" stroke-width="1.1"/><rect x="8" y="0" width="3" height="3" fill="#9a9a9a"/></svg>
<div class="a" style="left:134px;top:542px;width:1px;height:24px;background:#2b2b2b;"></div>
<div class="a" style="left:217px;top:542px;width:1px;height:24px;background:#2b2b2b;"></div>
<div class="a" style="left:134px;top:565px;width:84px;height:1px;background:#2b2b2b;"></div>
<svg class="a" style="left:139px;top:546px;" width="16" height="16" viewBox="0 0 16 16"><rect x="1" y="4" width="8" height="10" fill="#5aaee0"/><path d="M1 4H9M1 14H9" stroke="#c8c8c8" stroke-width="1.3"/><path d="M2 7H8M2 10H8" stroke="#2f6f9f" stroke-width="0.8"/><rect x="7" y="1" width="8" height="10" fill="#f0a830"/><path d="M7 1H15M7 11H15" stroke="#d8d8d8" stroke-width="1.3"/><path d="M8 4H14M8 7H14" stroke="#9a5a10" stroke-width="0.8"/></svg>
<svg class="a" style="left:203px;top:551px;" width="13" height="9" viewBox="0 0 13 9"><path d="M0 5H6M3.5 2.5L6.2 5L3.5 7.5" fill="none" stroke="#8a8a8a" stroke-width="1.1"/><rect x="8" y="0" width="3" height="3" fill="#9a9a9a"/></svg>
<div class="a" style="left:59px;top:571px;width:162px;height:24px;background:transparent;border:1px solid #8a8a8a;border-radius:2px"></div>
<div class="a" style="left:200px;top:572px;width:1px;height:22px;background:#8a8a8a;"></div>
<svg class="a" style="left:206px;top:580px;" width="9" height="6" viewBox="0 0 9 6"><path d="M0 0H8.5L4.25 5.5Z" fill="#c0c0c0"/></svg>
<div class="a" style="left:224px;top:573px;width:1px;height:1px;background:#9a9a9a;"></div>
<div class="a" style="left:224px;top:576px;width:1px;height:1px;background:#9a9a9a;"></div>
<div class="a" style="left:224px;top:579px;width:1px;height:1px;background:#9a9a9a;"></div>
<div class="a" style="left:224px;top:582px;width:1px;height:1px;background:#9a9a9a;"></div>
<div class="a" style="left:224px;top:585px;width:1px;height:1px;background:#9a9a9a;"></div>
<div class="a" style="left:224px;top:588px;width:1px;height:1px;background:#9a9a9a;"></div>
<div class="a" style="left:224px;top:591px;width:1px;height:1px;background:#9a9a9a;"></div>
<div class="a" style="left:224px;top:594px;width:1px;height:1px;background:#9a9a9a;"></div>
<svg class="a" style="left:233px;top:577px;" width="12" height="13" viewBox="0 0 12 13"><path d="M6 0.5L11.5 6H8V12.5H4V6H0.5Z" fill="#8c8c8c"/></svg>
<svg class="a" style="left:258px;top:577px;" width="12" height="13" viewBox="0 0 12 13"><path d="M6 12.5L11.5 7H8V0.5H4V7H0.5Z" fill="#8c8c8c"/></svg>
<svg class="a" style="left:282px;top:577px;" width="15" height="14" viewBox="0 0 15 14"><path d="M0.5 0.5H14L8.5 7V13.5L6 11V7Z" fill="#3d9ad6"/></svg>
<div class="a" style="left:58px;top:597px;width:244px;height:1px;background:#333537;"></div>
<svg class="a" style="left:308px;top:547px;" width="14" height="14" viewBox="0 0 14 14"><rect x="0.5" y="0.5" width="12" height="3" fill="#e0a246"/><rect x="0.5" y="4.5" width="12" height="3" fill="#e0a246"/><rect x="0.5" y="8.5" width="12" height="3" fill="#e0a246"/></svg>
<svg class="a" style="left:454px;top:551px;" width="13" height="9" viewBox="0 0 13 9"><path d="M0 5H6M3.5 2.5L6.2 5L3.5 7.5" fill="none" stroke="#8a8a8a" stroke-width="1.1"/><rect x="8" y="0" width="3" height="3" fill="#9a9a9a"/></svg>
<svg class="a" style="left:326px;top:573px;" width="14" height="14" viewBox="0 0 14 14"><circle cx="6.5" cy="6.5" r="6" fill="#4a9fd8"/><rect x="5.5" y="2.5" width="2" height="5.5" fill="#fff"/><rect x="5.5" y="9" width="2" height="2" fill="#fff"/></svg>
<svg class="a" style="left:474px;top:546px;" width="16" height="16" viewBox="0 0 16 16"><rect x="0.5" y="0.5" width="14" height="13" fill="#656870"/><rect x="0.5" y="0.5" width="14" height="2.5" fill="#5aa9e0"/><path d="M3 9L5 4.5L7 9M9 9L11 4.5L13 9" fill="none" stroke="#c8c8c8" stroke-width="1"/><circle cx="3.5" cy="12" r="2.8" fill="#3cb44b"/><circle cx="8" cy="12.5" r="2.8" fill="#3cb44b"/></svg>
<svg class="a" style="left:1284px;top:551px;" width="13" height="9" viewBox="0 0 13 9"><path d="M0 5H6M3.5 2.5L6.2 5L3.5 7.5" fill="none" stroke="#8a8a8a" stroke-width="1.1"/><rect x="8" y="0" width="3" height="3" fill="#9a9a9a"/></svg>
<svg class="a" style="left:476px;top:576px;" width="12" height="12" viewBox="0 0 12 12"><path d="M6 0V12M0 6H12" stroke="#3cb44b" stroke-width="2"/></svg>
<div class="a" style="left:501px;top:581px;width:12px;height:2px;background:#7a7a7a;"></div>
<svg class="a" style="left:526px;top:576px;" width="12" height="13" viewBox="0 0 12 13"><path d="M6 0.5L11.5 6H8V12.5H4V6H0.5Z" fill="#8c8c8c"/></svg>
<svg class="a" style="left:551px;top:576px;" width="12" height="13" viewBox="0 0 12 13"><path d="M6 12.5L11.5 7H8V0.5H4V7H0.5Z" fill="#8c8c8c"/></svg>
<svg class="a" style="left:574px;top:575px;" width="16" height="15" viewBox="0 0 16 15"><path d="M5.5 1H11.5L14.5 4V12H11" fill="none" stroke="#7a7a7a" stroke-width="1.6"/><path d="M1 4H7L9.5 6.5V14H1Z" fill="#3c3f41" stroke="#7a7a7a" stroke-width="1.6"/></svg>
<div class="a" style="left:470px;top:595px;width:827px;height:1px;background:#333537;"></div>
<svg class="a" style="left:37px;top:756px;" width="13" height="15" viewBox="0 0 13 15"><path d="M0.5 0.5L12 7.5L0.5 14.5Z" fill="#3cb44b"/></svg>
<div class="a" style="left:53px;top:769px;width:8px;height:1px;background:#bbbbbb;"></div>
<svg class="a" style="left:109px;top:756px;" width="16" height="16" viewBox="0 0 16 16"><path d="M10.1 3.9A5.6 5.6 0 1 0 10.1 12.1Q8.3 8 10.1 3.9Z" fill="#3cb44b"/><path d="M10.4 4.6Q14.1 5.2 14.1 8Q14.1 10.8 10.4 11.4Q9.1 8 10.4 4.6Z" fill="#aaa"/><path d="M3 0.5L5 3M6.5 0V2.5M9 0.5L7.5 3M3 15.5L5 13M6.5 16V13.5M9 15.5L7.5 13M12 4L14.5 2.5M12 12L14.5 13.5" stroke="#b0b0b0" stroke-width="1"/></svg>
<div class="a" style="left:126px;top:769px;width:8px;height:1px;background:#bbbbbb;"></div>
<svg class="a" style="left:196px;top:757px;" width="14" height="14" viewBox="0 0 14 14"><circle cx="8" cy="6.5" r="4" fill="#f0b060"/><path d="M4 4Q8 0.5 12 4V5H4Z" fill="#9a9a9a"/><rect x="3.5" y="10.5" width="9" height="3" fill="#4a9fd8"/><circle cx="3.5" cy="3.5" r="3.2" fill="#f0f0f0"/><path d="M1.8 2.8H5.2M1.8 4.3H5.2" stroke="#555" stroke-width="0.8"/><rect x="6" y="6" width="1" height="1" fill="#333"/><rect x="9" y="6" width="1" height="1" fill="#333"/></svg>
<div class="a" style="left:212px;top:769px;width:8px;height:1px;background:#bbbbbb;"></div>
<svg class="a" style="left:275px;top:757px;" width="13" height="13" viewBox="0 0 13 13"><rect x="0.5" y="0.5" width="12" height="12" fill="#000" stroke="#7a7a8a"/><path d="M2.5 3.5L5 6L2.5 8.5" fill="none" stroke="#fff" stroke-width="1"/><path d="M6 9.5H10" stroke="#fff" stroke-width="1"/></svg>
<svg class="a" style="left:1214px;top:756px;" width="14" height="14" viewBox="0 0 14 14"><path d="M0.5 0.5H13.5V10H6.5L3.5 13V10H0.5Z" fill="#5c6370"/><path d="M1 2L4 5M3 1L8 6M6 1L11 6M9 1L13 5M1 5L5 9M5 5L9 9M9 5L12 8" stroke="#8c9a6a" stroke-width="0.9"/><path d="M2 1L1 2M7 3L5 4M12 2L10 4M4 7L2 8M10 7L8 8" stroke="#9a7aa0" stroke-width="0.9"/></svg>
<svg class="a" style="left:10px;top:777px;" width="16" height="16" viewBox="0 0 16 16"><rect x="1.5" y="1.5" width="13" height="11" fill="#4f5662" stroke="#d8d8d8"/><rect x="1" y="13.5" width="14" height="1.5" fill="#d8d8d8"/></svg>
<svg class="a" style="left:1276px;top:780px;" width="11" height="11" viewBox="0 0 11 11"><path d="M1.5 4.5V2.5A2.2 2.2 0 0 1 5.9 2.5" fill="none" stroke="#a5a5a5" stroke-width="1.4"/><rect x="3.5" y="4.5" width="7" height="6" fill="#a5a5a5"/><path d="M7 6.5V9" stroke="#3c3f41" stroke-width="1.2"/></svg>
<svg class="a" style="left:1297px;top:777px;" width="15" height="16" viewBox="0 0 15 16"><path d="M3.5 6.5V3Q3.5 0.8 7.5 0.8Q11.5 0.8 11.5 3V6.5" fill="none" stroke="#b8b8b8" stroke-width="1.2"/><path d="M0.5 6.5H14.5" stroke="#b8b8b8" stroke-width="1.2"/><path d="M7.5 2.5V4.5" stroke="#b8b8b8"/><path d="M2.5 7V9.5Q2.5 15 7.5 15Q12.5 15 12.5 9.5V7" fill="none" stroke="#b8b8b8" stroke-width="1.1"/><path d="M4.8 9.5H6.5M8.5 9.5H10.2M5 13Q7.5 10.5 10 13" fill="none" stroke="#b8b8b8" stroke-width="1.2"/></svg>
<svg class="a" style="left:10px;top:156px;" width="14" height="14" viewBox="0 0 14 14"><path d="M3.5 1.8H8.5V8.5Q8.5 11.8 5.5 11.8H2" fill="none" stroke="#3d9ad6" stroke-width="2.6"/><path d="M12.2 0.5V12.8" stroke="#3d9ad6" stroke-width="2.4"/><circle cx="2" cy="6.2" r="1.8" fill="#f0970c"/></svg>
<svg class="a" style="left:10px;top:267px;" width="15" height="15" viewBox="0 0 15 15"><path d="M3.5 3.5L11.5 3.5L7.5 11Z" fill="none" stroke="#a0a0a0" stroke-width="1"/><circle cx="3.5" cy="3.5" r="3" fill="#4a9fd8"/><circle cx="11.5" cy="3.5" r="3" fill="#e8675a"/><circle cx="7.5" cy="11" r="3" fill="#e0913a"/></svg>
<svg class="a" style="left:10px;top:726px;" width="14" height="14" viewBox="0 0 14 14"><path d="M7 0.5L8.8 4.8L13.5 5.2L9.9 8.3L11 12.8L7 10.4L3 12.8L4.1 8.3L0.5 5.2L5.2 4.8Z" fill="#f0a030"/></svg>
<svg class="a" style="left:1302px;top:93px;" width="13" height="15" viewBox="0 0 13 15"><path d="M2.5 1L5 4M10.5 1L8 4M1 5.5H4.5M8.5 5.5H12M1 9L4.5 8M12 9L8.5 8M2 13.5L4 10.5M11 13.5L9 10.5" stroke="#c0c0c0" stroke-width="1"/><ellipse cx="6.5" cy="4.5" rx="3" ry="2.2" fill="#c47fd8"/><ellipse cx="6.5" cy="8" rx="2.5" ry="1.8" fill="#c47fd8"/><ellipse cx="6.5" cy="11.5" rx="3.2" ry="2.5" fill="#c47fd8"/></svg>
<div class="t" style="left:1300px;top:185px;font-size:18px;color:#4a9fd8;font-family:'Liberation Sans',sans-serif;font-weight:bold;font-style:italic;letter-spacing:-1px">m</div>
<svg class="a" style="left:1302px;top:311px;" width="14" height="15" viewBox="0 0 14 15"><path d="M1 10V1H6L7 2H12V4" fill="none" stroke="#5aaee0" stroke-width="2.2"/><rect x="4" y="4.5" width="9.5" height="9.5" fill="#2b2b2b" stroke="#c8c8c8" stroke-width="1"/><path d="M4 7.5H13.5M8 4.5V14M11 4.5V14" stroke="#c8c8c8" stroke-width="0.8"/></svg>
<div class="code" style="top:114px"><span class="k">package</span> com.youmeek.demo<span class="k">;</span>

<span class="k">public class</span> HelloWorld {
    <span class="k">public static void</span> <span class="f">main</span>(String[] args) {
        <span class="k">int</span> temp1 = <span class="n">100</span><span class="k">;</span>
        <span class="k">int</span> temp2 = <span class="n">50</span><span class="k">;</span>
        <span class="k">int</span> temp3 = <span class="i">addNum</span>(temp1<span class="k">,</span> temp2)<span class="k">;</span>
        System.<span class="st">out</span>.println(<span class="s">"-----------YouMeek.com-----------temp3</span><svg class="cj" width="13" height="13" viewBox="0 0 13 13"><path fill="none" stroke="#6a8759" stroke-width="1.1" d="M3 1L1 6M2.5 4V12.5M4.5 3H12.5M8.5 1V3M6 5H11V10.5H6ZM6 7H11M6 9H11M4.5 5V12.5H12.5"/></svg><span class="s">="</span> + temp3 + <span class="s">","</span> + <span class="s">"</span><svg class="cj" width="13" height="13" viewBox="0 0 13 13"><path fill="none" stroke="#6a8759" stroke-width="1.1" d="M2.5 1.5L3.5 4M6.5 0.5V4.5M10.5 1.5L9.5 4M2 6H11V12.5H2M3 9.2H11"/></svg><svg class="cj" width="13" height="13" viewBox="0 0 13 13"><path fill="none" stroke="#6a8759" stroke-width="1.1" d="M3.5 0.5L4.5 2.5M9.5 0.5L8.5 2.5M0.5 3.5H12.5M2 5.5H6V12.5M2 5.5V12.5M2 8H6M2 10H6M8.5 5.5V10.5M11 4.5V12.5L10 12"/></svg><svg class="cj" width="13" height="13" viewBox="0 0 13 13"><path fill="none" stroke="#6a8759" stroke-width="1.1" d="M0.5 4H12.5M6.5 0.5V7M3 1.5L4 3M10 1.5L9 3M6 4.5L2 7M7 4.5L11 7M0.5 9H12.5M6.5 7.5L2 12.5M6.8 9.5L11.5 12.5"/></svg><span class="s">=HelloWorld.main()"</span>)<span class="k">;</span>
    }

    <span class="k">public static</span> Integer <span class="f">addNum</span>(Integer temp1<span class="k">,</span> Integer temp2) {
        <span class="k">int</span> temp3 = temp1 + temp2<span class="k">;</span>
        <span class="k">return</span> temp3<span class="k">;</span>
    }
}</div>
</body></html>
